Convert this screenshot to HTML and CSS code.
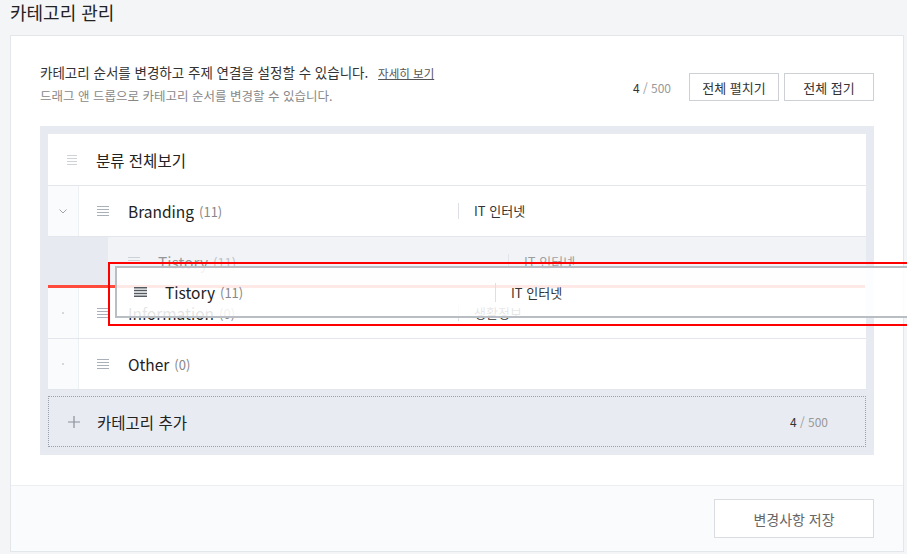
FILE: index.html
```html
<!DOCTYPE html>
<html lang="ko">
<head>
<meta charset="utf-8">
<title>카테고리 관리</title>
<link rel="stylesheet" href="styles.css">
</head>
<body>
<div class="page">
  <h1 class="title">카테고리 관리</h1>
  <div class="card">
    <div class="card-body">
      <div class="head">
        <div class="desc">
          <p class="desc-main">카테고리 순서를 변경하고 주제 연결을 설정할 수 있습니다. <a class="more" href="#">자세히 보기</a></p>
          <p class="desc-sub">드래그 앤 드롭으로 카테고리 순서를 변경할 수 있습니다.</p>
        </div>
        <div class="tools">
          <span class="count"><b>4</b> / 500</span>
          <button class="btn">전체 펼치기</button>
          <button class="btn">전체 접기</button>
        </div>
      </div>

      <div class="tree">
        <ul class="list">
          <li class="row row-all">
            <svg class="handle handle-light" width="10" height="10" viewBox="0 0 10 10"><path d="M0 0.5H10M0 3.5H10M0 6.5H10M0 9.5H10" stroke="currentColor" stroke-width="1"/></svg>
            <span class="label">분류 전체보기</span>
          </li>
          <li class="row">
            <span class="lead"><svg width="8" height="5" viewBox="0 0 8 5"><path d="M0.5 0.5L4 4L7.5 0.5" fill="none" stroke="#a0a4aa" stroke-width="1"/></svg></span>
            <span class="name">
              <svg class="handle" width="12" height="10" viewBox="0 0 12 10"><path d="M0 0.5H12M0 3.5H12M0 6.5H12M0 9.5H12" stroke="currentColor" stroke-width="1"/></svg>
              <span class="label">Branding</span><span class="num">(11)</span>
            </span>
            <span class="topic">IT 인터넷</span>
          </li>
          <li class="row row-child">
            <span class="name">
              <svg class="handle" width="12" height="10" viewBox="0 0 12 10"><path d="M0 0.5H12M0 3.5H12M0 6.5H12M0 9.5H12" stroke="currentColor" stroke-width="1"/></svg>
              <span class="label">Tistory</span><span class="num">(11)</span>
            </span>
            <span class="topic">IT 인터넷</span>
          </li>
          <li class="row">
            <span class="lead"><i class="dot"></i></span>
            <span class="name">
              <svg class="handle" width="12" height="10" viewBox="0 0 12 10"><path d="M0 0.5H12M0 3.5H12M0 6.5H12M0 9.5H12" stroke="currentColor" stroke-width="1"/></svg>
              <span class="label">Information</span><span class="num">(0)</span>
            </span>
            <span class="topic">생활정보</span>
          </li>
          <li class="row">
            <span class="lead"><i class="dot"></i></span>
            <span class="name">
              <svg class="handle" width="12" height="10" viewBox="0 0 12 10"><path d="M0 0.5H12M0 3.5H12M0 6.5H12M0 9.5H12" stroke="currentColor" stroke-width="1"/></svg>
              <span class="label">Other</span><span class="num">(0)</span>
            </span>
          </li>
        </ul>

        <div class="add">
          <svg class="plus" width="12" height="12" viewBox="0 0 12 12"><path d="M6 0V12M0 6H12" stroke="#8a9099" stroke-width="1.2"/></svg>
          <span class="add-label">카테고리 추가</span>
          <span class="count add-count"><b>4</b> / 500</span>
        </div>

        <div class="drop-line"></div>
        <div class="ghost">
          <span class="name">
            <svg class="handle handle-dark" width="13" height="10" viewBox="0 0 13 10"><path d="M0 0.75H13M0 3.6H13M0 6.4H13M0 9.25H13" stroke="currentColor" stroke-width="1.5"/></svg>
            <span class="label">Tistory</span><span class="num">(11)</span>
          </span>
          <span class="topic">IT 인터넷</span>
        </div>
        <div class="highlight"></div>
      </div>
    </div>
    <div class="card-foot">
      <button class="btn-save">변경사항 저장</button>
    </div>
  </div>
</div>
</body>
</html>
```

FILE: styles.css
```css
html, body {
  overflow: hidden;
}

body {
  margin: 0;
  background: #f4f5f7;
  font-family: "Noto Sans CJK KR", "Noto Sans", sans-serif;
  color: #222;
}

.page {
  padding: 0 4px 0 10px;
}

.title {
  margin: 0;
  font-size: 18px;
  font-weight: 400;
  line-height: 24px;
  color: #222;
}

.card {
  margin-top: 11px;
  width: 892px;
  background: #fff;
  border: 1px solid #e3e6ea;
}

.card-body {
  padding: 24px 29px 30px;
}

.head {
  display: flex;
  justify-content: space-between;
  align-items: flex-end;
}

.desc p {
  margin: 0;
}

.desc-main {
  font-size: 13.5px;
  line-height: 24px;
  height: 24px;
  color: #333;
}

.desc-sub {
  font-size: 12.5px;
  line-height: 24px;
  color: #888;
}

.more {
  color: #555;
  font-size: 11.5px;
  line-height: 1;
  text-decoration: underline;
  margin-left: 6px;
}

.tools {
  display: flex;
  align-items: center;
  gap: 5px;
  margin-bottom: 7px;
}

.count {
  font-size: 12px;
  color: #999;
}

.count b {
  font-weight: 400;
  color: #333;
}

.tools .count {
  margin-right: 13px;
}

.btn {
  width: 90px;
  height: 28px;
  padding: 0;
  border: 1px solid #cdd0d5;
  background: #fff;
  font-family: inherit;
  font-size: 13px;
  color: #333;
}

.tree {
  position: relative;
  margin-top: 18px;
  padding: 8px;
  background: #e7ebf1;
}

.list {
  list-style: none;
  margin: 0;
  padding: 0;
}

.row {
  display: flex;
  align-items: center;
  height: 50px;
  background: #fff;
  border-bottom: 1px solid #e3e7ed;
}

.row-all {
  height: 51px;
  padding-left: 19px;
}

.row-all .label {
  margin-left: 19px;
}

.lead {
  align-self: stretch;
  width: 30px;
  flex: none;
  display: flex;
  align-items: center;
  justify-content: center;
  background: #fafbfc;
  border-right: 1px solid #edf0f3;
}

.dot {
  width: 2px;
  height: 2px;
  border-radius: 50%;
  background: #c9cdd3;
}

.name {
  display: flex;
  align-items: center;
  width: 379px;
  flex: none;
  box-sizing: border-box;
  padding-left: 18px;
}

.handle {
  flex: none;
  color: #aab0b7;
}

.handle-light {
  color: #cfd3d8;
}

.handle-dark {
  color: #555a60;
}

.label {
  font-size: 15.5px;
  color: #222;
  margin-left: 19px;
}

.num {
  font-size: 13px;
  color: #888;
  margin-left: 5px;
}

.topic {
  border-left: 1px solid #dcdfe3;
  padding-left: 15px;
  font-size: 13px;
  line-height: 16px;
  color: #333;
}

.row-child {
  margin-left: 60px;
  opacity: 0.42;
}

.row-child .name {
  width: 400px;
  padding-left: 20px;
}

.row-child .label {
  margin-left: 18px;
}

.add {
  display: flex;
  align-items: center;
  height: 49px;
  margin-top: 6px;
  padding: 0 37px 0 19px;
  border: 1px dotted #9aa0a9;
  background: #e8ecf2;
}

.plus {
  flex: none;
}

.add-label {
  margin-left: 17px;
  font-size: 15.5px;
  color: #222;
}

.add-count {
  margin-left: auto;
}

.drop-line {
  position: absolute;
  left: 8px;
  top: 159px;
  width: 817px;
  height: 3px;
  background: #ff4b3c;
}

.ghost {
  position: absolute;
  left: 75px;
  top: 140px;
  width: 820px;
  height: 48px;
  display: flex;
  align-items: center;
  border: 2px solid #b9bdc4;
  background: rgba(255, 255, 255, 0.88);
}

.ghost .name {
  width: 378px;
  padding-left: 17px;
}

.ghost .label {
  margin-left: 18px;
}

.ghost .topic {
  line-height: 19px;
}

.highlight {
  position: absolute;
  left: 68px;
  top: 136px;
  width: 840px;
  height: 60px;
  border: 2px solid #ff0000;
}

.card-foot {
  display: flex;
  justify-content: flex-end;
  padding: 13px 29px;
  background: #fafbfc;
  border-top: 1px solid #eceef1;
}

.btn-save {
  width: 160px;
  height: 39px;
  padding: 0;
  border: 1px solid #d9dce0;
  background: #fff;
  font-family: inherit;
  font-size: 14px;
  color: #666;
}
```
